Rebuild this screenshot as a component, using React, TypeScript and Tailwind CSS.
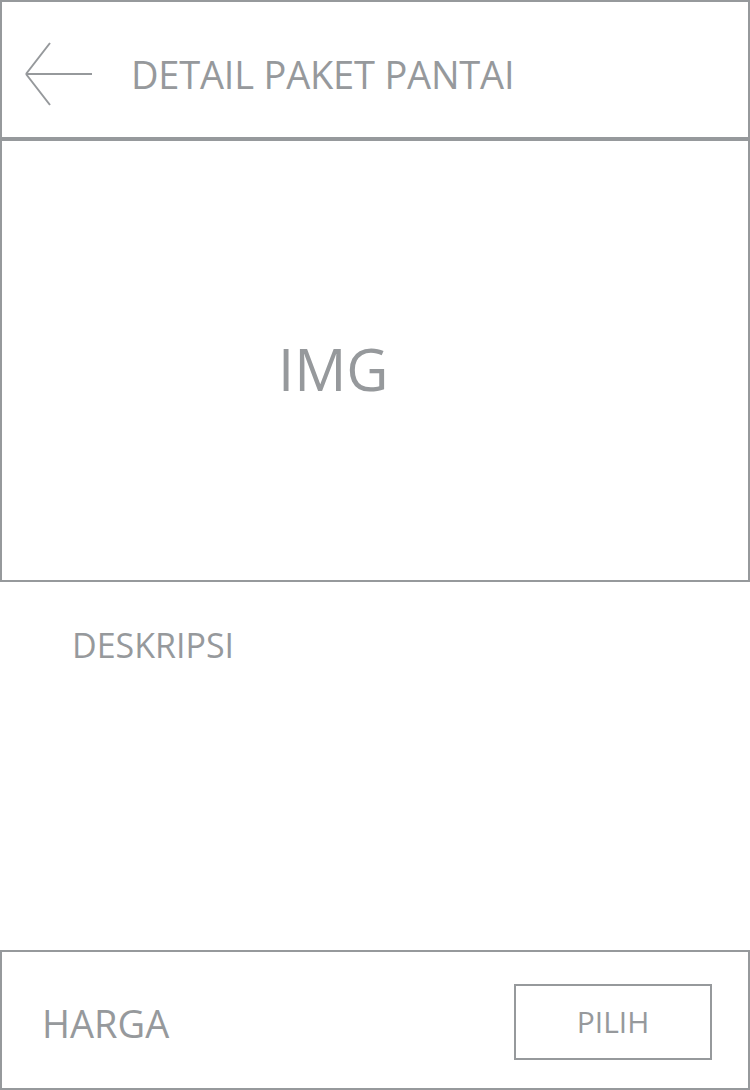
import React from 'react';

const App: React.FC = () => {
  return (
    <div className="w-[750px] h-[1090px] bg-white flex flex-col text-[#96999c] font-['Open_Sans',sans-serif]">
      {/* Header */}
      <div className="h-[141px] border-2 border-b-4 border-[#96999c] flex items-center pt-[8px]">
        <svg className="ml-[20px]" width="72" height="66" viewBox="0 0 72 66" fill="none">
          <path d="M70 33H4M4 33L28 2M4 33L28 64" stroke="#96999c" strokeWidth="2" />
        </svg>
        <h1 className="ml-[37px] text-[38px] leading-none tracking-[-0.2px]">DETAIL PAKET PANTAI</h1>
      </div>

      {/* Image placeholder */}
      <div className="h-[441px] border-2 border-t-0 border-[#96999c] flex items-center pl-[276px] pt-[16px]">
        <span className="text-[58px] leading-none">IMG</span>
      </div>

      {/* Description */}
      <div className="flex-1 pl-[72px] pt-[46px]">
        <p className="text-[34px] leading-none">DESKRIPSI</p>
      </div>

      {/* Bottom bar */}
      <div className="h-[140px] border-2 border-[#96999c] flex items-center justify-between pl-[40px] pr-[36px] pt-[4px]">
        <span className="text-[38px] leading-none mt-[2px]">HARGA</span>
        <button className="w-[198px] h-[76px] border-2 border-[#96999c] flex items-center justify-center text-[30px] leading-none">
          PILIH
        </button>
      </div>
    </div>
  );
};

export default App;
